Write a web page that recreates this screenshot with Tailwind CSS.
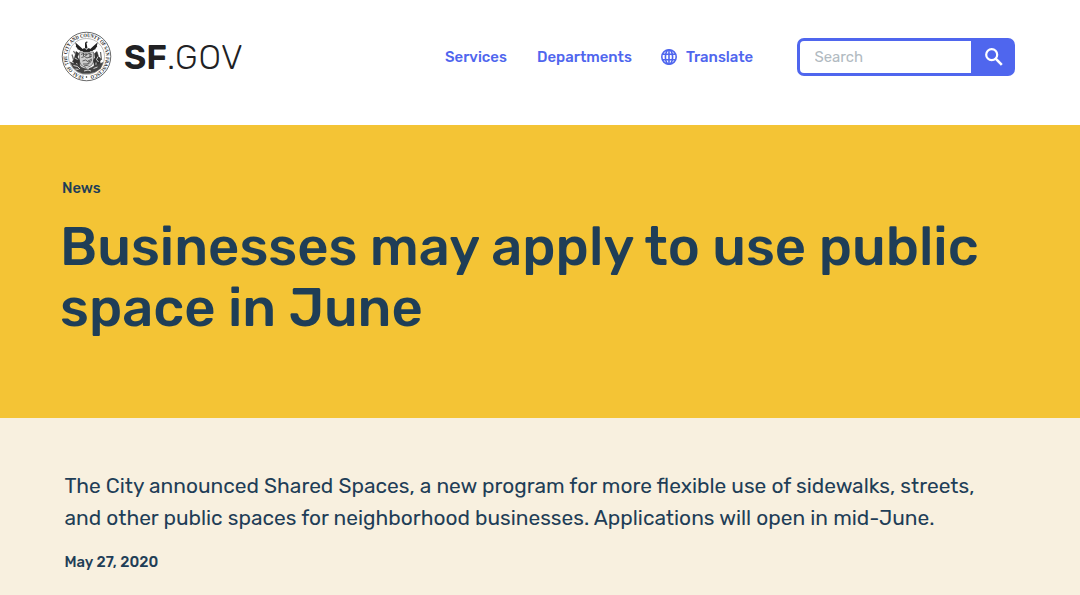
<!DOCTYPE html>
<html lang="en">
<head>
    <meta charset="UTF-8">
    <meta name="viewport" content="width=device-width, initial-scale=1.0">
    <title>Businesses may apply to use public space in June | San Francisco</title>
    <script src="https://cdn.jsdelivr.net/npm/@tailwindcss/browser@4"></script>
</head>
<body class="bg-[#f8f0df] h-[595px] overflow-hidden font-['Rubik','Roboto',sans-serif] text-[#1f3e57]">

    <!-- Header -->
    <header class="bg-white h-[125px] pl-[61px] pr-[65px] pt-[31px] flex items-start">
        <a href="#" class="flex items-center h-[51px]">
            <!-- City seal -->
            <svg class="w-[51px] h-[51px] shrink-0" viewBox="0 0 102 102" fill="none" stroke="#222">
                <circle cx="51" cy="51" r="48.5" stroke="#444" stroke-width="1.600" />
                <circle cx="51" cy="51" r="36" stroke="#777" stroke-width="1" />
                <path id="seal" stroke="none" d="M46 89.7A39 39 0 1 1 56 89.7" />
                <text font-size="10.500" font-weight="700" fill="#222" stroke="none" font-family="Liberation Serif, serif">
                    <textPath href="#seal" textLength="232" lengthAdjust="spacingAndGlyphs">SEAL OF THE CITY AND COUNTY OF SAN FRANCISCO</textPath>
                </text>
                <circle cx="51" cy="92" r="1.5" fill="#222" stroke="none" />
                <!-- Phoenix -->
                <path d="M51 38l-5-4-3 2-7-6-9-8 2 8-1 1 4 4-1 1 6 3 0 1 7 1-2 4h18l-2-4 7-1 0-1 6-3-1-1 4-4-1-1 2-8-9 8-7 6-3-2z" transform="translate(3 2)scale(.94)" fill="#222" stroke="none" />
                <path d="M48 35V24q2-5 6-2l-3 2 2 11z" fill="#222" stroke="none" />
                <!-- Shield and figures -->
                <path d="M37 42h28v20q-1 8-14 12Q38 70 37 62z" fill="#ccc" stroke="#444" stroke-width="1.200" />
                <path d="M40 47l5-2 4 3 7-3 6 3M41 53l6-2 5 3 10-4M43 60l6-2 6 4 7-3M44 66h8l7-3M46 70l9-2M45 44v6M50 44v6M58 44v10M54 60l8-4" stroke="#444" stroke-width="1.700" />
                <path d="M30 41l6 4-3 7 4 7 1 13-13-1 1-8-3-2 4-7zM72 41l-5 4 1 8-3 6 2 13 12-2-1-9 2-5-5-5z" fill="#333" stroke-width="1" />
                <path d="M28 54l5 3M74 51l-3 6 4 5M31 64l2 5M70 63v5" stroke="#fff" stroke-width="1.500" />
                <path d="M18 62l8 3 11 4 5 4 10 3 9-3 7-4 16-6-5 12-11 7-11 3H43l-10-4-9-8z" fill="#444" stroke="#444" stroke-width="1" />
                <path d="M25 69l8 2 5 5M46 80l8-2 6 2M65 75l8-3M29 76l6 1M51 73l5 2" stroke="#fff" stroke-width="1.500" />
                <path d="M22 47l3 10M25 40l3 5M79 42l2 16" stroke="#666" stroke-width="2.500" />
            </svg>
            <span class="ml-[12px] mt-[2px] text-[34px] leading-[51px] text-[#212123] whitespace-nowrap"><b class="font-semibold">SF</b><span class="font-light tracking-[0.8px]">.GOV</span></span>
        </a>

        <div class="ml-auto h-[51px] flex items-center">
            <nav class="flex items-center pt-px text-[14.9px] font-medium text-[#4f66ee] whitespace-nowrap">
                <a href="#" class="w-[92px]">Services</a>
                <a href="#" class="w-[124px]">Departments</a>
                <a href="#" class="w-[136px] flex items-center">
                    <svg class="w-4 h-4 mr-[9px]" viewBox="0 0 16 16" fill="none" stroke="currentColor" stroke-width="1.600">
                        <circle cx="8" cy="8" r="7.200" />
                        <ellipse cx="8" cy="8" rx="3.600" ry="7.200" />
                        <path d="M8 1v14M1.500 5.300h13M1.500 10.700h13" />
                    </svg>
                    Translate
                </a>
            </nav>
            <form class="flex w-[218px] h-[38px] rounded-[7px] bg-[#4f66ee] p-[3px] pr-0">
                <input type="text" placeholder="Search" class="w-[171px] h-8 bg-white rounded-l-[4px] pl-[14.5px] text-[14.9px] placeholder:text-[#b1bac1] outline-none">
                <button type="button" class="flex-1 pl-[2px] flex items-center justify-center text-white" aria-label="Search">
                    <svg class="w-[18px] h-[18px]" viewBox="0 0 18 18" fill="none" stroke="currentColor" stroke-width="2.200">
                        <circle cx="6.700" cy="6.700" r="5.500" />
                        <path d="M10.700 10.700L16.800 16.800" stroke-width="2.600" />
                    </svg>
                </button>
            </form>
        </div>
    </header>

    <!-- Title banner -->
    <section class="bg-[#f4c435] h-[293px] px-[62px] pt-[53px]">
        <p class="text-[14.8px] leading-5 font-medium">News</p>
        <h1 class="-ml-[2px] mt-[18px] text-[54.3px] leading-[61px] font-medium whitespace-nowrap">
            Businesses may apply to use public<br>
            space in June
        </h1>
    </section>

    <!-- Summary -->
    <section class="px-[64.5px] pt-[52px]">
        <p class="text-[20.93px] leading-8 whitespace-nowrap">
            The City announced Shared Spaces, a new program for more flexible use of sidewalks, streets,<br>
            and other public spaces for neighborhood businesses. Applications will open in mid-June.
        </p>
        <p class="mt-[18px] text-[14.9px] leading-5 font-medium">May 27, 2020</p>
    </section>

</body>
</html>
